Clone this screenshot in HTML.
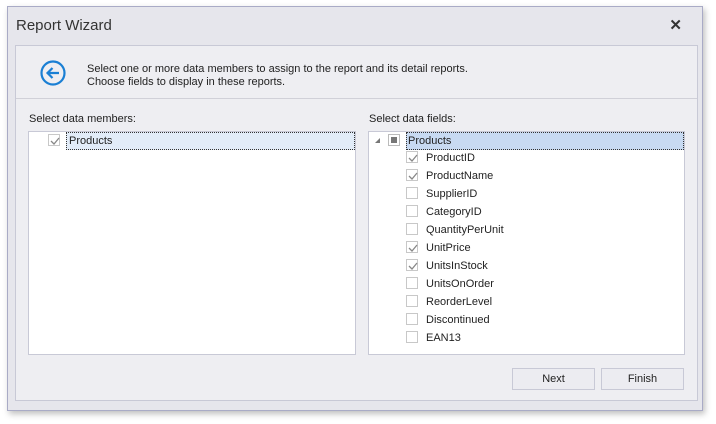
<!DOCTYPE html><html><head><style>
*{margin:0;padding:0;box-sizing:border-box}
body{width:716px;height:424px;background:#fff;font-family:"Liberation Sans",sans-serif;font-size:12px;color:#222;position:relative;overflow:hidden}
.win{position:absolute;left:7px;top:6px;width:696px;height:405px;background:#e6e6ec;border:1px solid #a9abc6;box-shadow:2px 3px 6px rgba(0,0,0,.25)}
.title{position:absolute;left:8px;top:10px;font-size:15px;color:#333}
.x{position:absolute;right:20px;top:9px;font-size:15px;font-weight:bold;color:#333}
.panel{position:absolute;left:7px;top:38px;width:683px;height:356px;background:#eeeef2;border:1px solid #c8c9d6}
.hdr{position:absolute;left:0;top:0;right:0;height:53px;border-bottom:1px solid #d0d0d8}
.txt{position:absolute;left:71px;top:17px;line-height:13px;font-size:11px;color:#222}
.lbl{position:absolute;font-size:11px;color:#222}
.box{position:absolute;background:#fff;border:1px solid #c8c9d6}
.row{position:absolute;height:18px;font-size:11px;line-height:17px}
.cb{position:absolute;width:12px;height:12px;border:1px solid #c8c8c8;background:#fff}
.cb svg{position:absolute;left:0;top:0}
.btn{position:absolute;width:83px;height:22px;border:1px solid #c8c9d6;background:#ececf1;text-align:center;line-height:20px;font-size:11px}
</style></head><body>
<div class="win">
<div class="title">Report Wizard</div>
<div class="x">✕</div>
<div class="panel">
<div class="hdr">
<svg style="position:absolute;left:23px;top:13px" width="28" height="28" viewBox="0 0 28 28"><circle cx="14" cy="14" r="11.5" fill="none" stroke="#1a7fd4" stroke-width="2.2"/><path d="M20 14H8.5M13.5 9l-5 5 5 5" fill="none" stroke="#1a7fd4" stroke-width="2.2"/></svg>
<div class="txt">Select one or more data members to assign to the report and its detail reports.<br>Choose fields to display in these reports.</div>
</div>
<div class="lbl" style="left:13px;top:67px">Select data members:</div>
<div class="lbl" style="left:353px;top:67px">Select data fields:</div>
<div class="box" style="left:12px;top:85px;width:328px;height:224px">
<div class="cb" style="left:19px;top:2px"><svg width="12" height="12"><path d="M2 6l3 3 5-6" fill="none" stroke="#888" stroke-width="1.3"/></svg></div>
<div class="row" style="left:37px;top:0;width:289px;background:#e2ecf8;border:1px dotted #333;padding-left:2px">Products</div>
</div>
<div class="box" style="left:352px;top:85px;width:317px;height:224px">
<div style="position:absolute;left:6px;top:6px;width:0;height:0;border-left:5px solid transparent;border-bottom:5px solid #777"></div>
<div class="cb" style="left:19px;top:2px;border-color:#bbb"><div style="position:absolute;left:2px;top:2px;width:6px;height:6px;background:#777"></div></div>
<div class="row" style="left:37px;top:0;width:278px;background:#c8daf2;border:1px dotted #333;padding-left:1px">Products</div>
<div class="cb" style="left:37px;top:19px"><svg width="12" height="12"><path d="M2 6l3 3 5-6" fill="none" stroke="#888" stroke-width="1.3"/></svg></div><div class="row" style="left:57px;top:18px">ProductID</div>
<div class="cb" style="left:37px;top:37px"><svg width="12" height="12"><path d="M2 6l3 3 5-6" fill="none" stroke="#888" stroke-width="1.3"/></svg></div><div class="row" style="left:57px;top:36px">ProductName</div>
<div class="cb" style="left:37px;top:55px"></div><div class="row" style="left:57px;top:54px">SupplierID</div>
<div class="cb" style="left:37px;top:73px"></div><div class="row" style="left:57px;top:72px">CategoryID</div>
<div class="cb" style="left:37px;top:91px"></div><div class="row" style="left:57px;top:90px">QuantityPerUnit</div>
<div class="cb" style="left:37px;top:109px"><svg width="12" height="12"><path d="M2 6l3 3 5-6" fill="none" stroke="#888" stroke-width="1.3"/></svg></div><div class="row" style="left:57px;top:108px">UnitPrice</div>
<div class="cb" style="left:37px;top:127px"><svg width="12" height="12"><path d="M2 6l3 3 5-6" fill="none" stroke="#888" stroke-width="1.3"/></svg></div><div class="row" style="left:57px;top:126px">UnitsInStock</div>
<div class="cb" style="left:37px;top:145px"></div><div class="row" style="left:57px;top:144px">UnitsOnOrder</div>
<div class="cb" style="left:37px;top:163px"></div><div class="row" style="left:57px;top:162px">ReorderLevel</div>
<div class="cb" style="left:37px;top:181px"></div><div class="row" style="left:57px;top:180px">Discontinued</div>
<div class="cb" style="left:37px;top:199px"></div><div class="row" style="left:57px;top:198px">EAN13</div>
</div>
<div class="btn" style="left:496px;top:322px">Next</div>
<div class="btn" style="left:585px;top:322px">Finish</div>
</div>
</div>
</body></html>
